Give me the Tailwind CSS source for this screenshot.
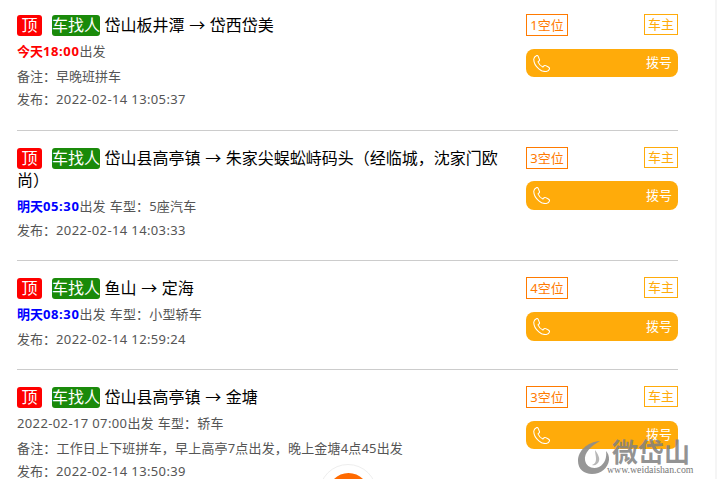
<!DOCTYPE html>
<html lang="en">
<head>
    <title>拼车</title>
    <meta charset="UTF-8">
    <script src="https://cdn.jsdelivr.net/npm/@tailwindcss/browser@4"></script>
</head>
<body class="bg-white">
<div class="relative h-[479px] overflow-hidden font-['Noto_Sans','Noto_Sans_CJK_SC',sans-serif] text-[13px] text-[#555]">
    <div class="w-[715px] pl-[17px] pr-[37px]">
        <!-- row 1 -->
        <div class="flex h-[131px] pt-[14px] border-b border-[#ccc]">
            <div class="flex-1 pr-[16px]">
                <div class="text-[16px] leading-[22px] text-black"><span class="inline-block w-[25px] h-[21px] leading-[21px] text-center rounded-[3px] bg-[#f00] text-white">顶</span><span class="inline-block ml-[10px] mr-[4.5px] h-[21px] leading-[21px] rounded-[3px] bg-[#1a8a0a] text-white">车找人</span>岱山板井潭 <span class="mx-[0.5px]">→</span> 岱西岱美</div>
                <div class="mt-[3px] leading-[25px]"><b class="text-[#f00]">今天<span class="tracking-[0.6px]">18:00</span></b>出发</div>
                <div class="leading-[24px]">备注：早晚班拼车</div>
                <div class="leading-[23px]">发布：<span class="tracking-[0.37px]">2022-02-14 13:05:37</span></div>
            </div>
            <div class="w-[152px] shrink-0">
                <div class="flex justify-between items-start h-[35px]">
                    <span class="border border-[#ff7a00] w-[42px] h-[22px] leading-[20px] text-center text-[#ff7a00]">1空位</span>
                    <span class="border border-[#ffab0a] w-[34px] h-[21px] leading-[19px] text-center text-[#ffab0a]">车主</span>
                </div>
                <div class="flex justify-between items-center h-[28px] rounded-[8px] bg-[#ffab0a] pl-[7px] pr-[6px] text-white">
                    <svg class="w-[17px] h-[17px]" viewBox="0 0 16 16" fill="none" stroke="currentColor" stroke-width="1"><path d="M3.500.5C2 1.200.8 2.500.7 4c.1 4 2.300 7 4.800 9 2 1.800 4.500 2.800 7 2.500 1.500-.3 2.800-1.500 3-2.500.2-.7-.5-1.500-1.500-2l-2-1c-1-.4-1.700 0-2.200.7l-.5.6C7.500 10.500 5.500 8.500 4.700 6.500l.8-.7c.7-.6.8-1.300.4-2.100L5 1.500C4.700.7 4.200.3 3.500.5z"/></svg>
                    拨号
                </div>
            </div>
        </div>
        <!-- row 2 -->
        <div class="flex h-[130px] pt-[16px] border-b border-[#ccc]">
            <div class="flex-1 pr-[16px]">
                <div class="text-[16px] leading-[22px] text-black"><span class="inline-block w-[25px] h-[21px] leading-[21px] text-center rounded-[3px] bg-[#f00] text-white">顶</span><span class="inline-block ml-[10px] mr-[4.5px] h-[21px] leading-[21px] rounded-[3px] bg-[#1a8a0a] text-white">车找人</span>岱山县高亭镇 <span class="mx-[0.5px]">→</span> 朱家尖蜈蚣峙码头（经临城，沈家门欧尚）</div>
                <div class="mt-[3px] leading-[25px]"><b class="text-[#00f]">明天<span class="tracking-[0.6px]">05:30</span></b>出发 <span class="ml-[1px] tracking-[0.15px]">车型：5座汽车</span></div>
                <div class="leading-[22px]">发布：<span class="tracking-[0.37px]">2022-02-14 14:03:33</span></div>
            </div>
            <div class="w-[152px] shrink-0">
                <div class="flex justify-between items-start h-[34px]">
                    <span class="border border-[#ff7a00] w-[42px] h-[22px] leading-[20px] text-center text-[#ff7a00]">3空位</span>
                    <span class="border border-[#ffab0a] w-[34px] h-[21px] leading-[19px] text-center text-[#ffab0a]">车主</span>
                </div>
                <div class="flex justify-between items-center h-[29px] rounded-[8px] bg-[#ffab0a] pl-[7px] pr-[6px] text-white">
                    <svg class="w-[17px] h-[17px]" viewBox="0 0 16 16" fill="none" stroke="currentColor" stroke-width="1"><path d="M3.500.5C2 1.200.8 2.500.7 4c.1 4 2.300 7 4.800 9 2 1.800 4.500 2.800 7 2.500 1.500-.3 2.800-1.500 3-2.500.2-.7-.5-1.500-1.500-2l-2-1c-1-.4-1.700 0-2.200.7l-.5.6C7.500 10.500 5.500 8.500 4.700 6.500l.8-.7c.7-.6.8-1.300.4-2.100L5 1.500C4.700.7 4.200.3 3.500.5z"/></svg>
                    拨号
                </div>
            </div>
        </div>
        <!-- row 3 -->
        <div class="flex h-[109px] pt-[16px] border-b border-[#ccc]">
            <div class="flex-1 pr-[16px]">
                <div class="text-[16px] leading-[22px] text-black"><span class="inline-block w-[25px] h-[21px] leading-[21px] text-center rounded-[3px] bg-[#f00] text-white">顶</span><span class="inline-block ml-[10px] mr-[4.5px] h-[21px] leading-[21px] rounded-[3px] bg-[#1a8a0a] text-white">车找人</span>鱼山 <span class="mx-[0.5px]">→</span> 定海</div>
                <div class="mt-[3px] leading-[25px]"><b class="text-[#00f]">明天<span class="tracking-[0.6px]">08:30</span></b>出发 <span class="ml-[1px] tracking-[0.15px]">车型：小型轿车</span></div>
                <div class="leading-[25px]">发布：<span class="tracking-[0.37px]">2022-02-14 12:59:24</span></div>
            </div>
            <div class="w-[152px] shrink-0">
                <div class="flex justify-between items-start h-[35px]">
                    <span class="border border-[#ff7a00] w-[42px] h-[22px] leading-[20px] text-center text-[#ff7a00]">4空位</span>
                    <span class="border border-[#ffab0a] w-[34px] h-[21px] leading-[19px] text-center text-[#ffab0a]">车主</span>
                </div>
                <div class="flex justify-between items-center h-[29px] rounded-[8px] bg-[#ffab0a] pl-[7px] pr-[6px] text-white">
                    <svg class="w-[17px] h-[17px]" viewBox="0 0 16 16" fill="none" stroke="currentColor" stroke-width="1"><path d="M3.500.5C2 1.200.8 2.500.7 4c.1 4 2.300 7 4.800 9 2 1.800 4.500 2.800 7 2.500 1.500-.3 2.800-1.500 3-2.500.2-.7-.5-1.500-1.500-2l-2-1c-1-.4-1.700 0-2.200.7l-.5.6C7.500 10.500 5.500 8.500 4.700 6.500l.8-.7c.7-.6.8-1.300.4-2.100L5 1.500C4.700.7 4.200.3 3.500.5z"/></svg>
                    拨号
                </div>
            </div>
        </div>
        <!-- row 4 -->
        <div class="flex pt-[16px]">
            <div class="flex-1 pr-[16px]">
                <div class="text-[16px] leading-[22px] text-black"><span class="inline-block w-[25px] h-[21px] leading-[21px] text-center rounded-[3px] bg-[#f00] text-white">顶</span><span class="inline-block ml-[10px] mr-[4.5px] h-[21px] leading-[21px] rounded-[3px] bg-[#1a8a0a] text-white">车找人</span>岱山县高亭镇 <span class="mx-[0.5px]">→</span> 金塘</div>
                <div class="mt-[3px] leading-[25px]"><span class="tracking-[0.37px]">2022-02-17 07:00</span>出发 <span class="ml-[1px] tracking-[0.15px]">车型：轿车</span></div>
                <div class="leading-[24px] tracking-[0.17px]">备注：工作日上下班拼车，早上高亭7点出发，晚上金塘4点45出发</div>
                <div class="leading-[23px]">发布：<span class="tracking-[0.37px]">2022-02-14 13:50:39</span></div>
            </div>
            <div class="w-[152px] shrink-0">
                <div class="flex justify-between items-start h-[35px]">
                    <span class="border border-[#ff7a00] w-[42px] h-[22px] leading-[20px] text-center text-[#ff7a00]">3空位</span>
                    <span class="border border-[#ffab0a] w-[34px] h-[21px] leading-[19px] text-center text-[#ffab0a]">车主</span>
                </div>
                <div class="flex justify-between items-center h-[28px] rounded-[8px] bg-[#ffab0a] pl-[7px] pr-[6px] text-white">
                    <svg class="w-[17px] h-[17px]" viewBox="0 0 16 16" fill="none" stroke="currentColor" stroke-width="1"><path d="M3.500.5C2 1.200.8 2.500.7 4c.1 4 2.300 7 4.800 9 2 1.800 4.500 2.800 7 2.500 1.500-.3 2.800-1.500 3-2.500.2-.7-.5-1.500-1.500-2l-2-1c-1-.4-1.700 0-2.200.7l-.5.6C7.500 10.500 5.500 8.500 4.700 6.500l.8-.7c.7-.6.8-1.300.4-2.100L5 1.500C4.700.7 4.200.3 3.500.5z"/></svg>
                    拨号
                </div>
            </div>
        </div>
    </div>
    <div class="absolute top-0 right-0 w-[2px] h-full bg-[#f5f5f5]"></div>
    <!-- floating round button, cut off by the window -->
    <div class="absolute left-[319px] top-[464px] w-[58px] h-[58px] rounded-full bg-white border border-[#eee] flex items-center justify-center">
        <div class="w-[41px] h-[41px] rounded-full bg-[#ff6a00]"></div>
    </div>
    <!-- watermark -->
    <div class="absolute left-[577px] top-[438px] w-[114px] h-[38px]">
        <svg class="absolute left-0 top-[3px] w-[33px] h-[33px]" viewBox="0 0 33 33"><path d="M23 0C10 1 1 10 1 20c0 8 6 13 14 13 9 0 16-6 17-14 .3-4-1-7-3-9 1 6-1 13-7 16-6 2.500-13 0-14-7C7 12 14 5 23 0z" fill="#8c8c8c" fill-opacity=".9"/><path d="M18 9c3 4 5 8 4 11-1 3-4 5-7 4 3-1 4-3 4-6 0-3-1-6-1-9z" fill="#aaa" fill-opacity=".85"/></svg>
        <div class="absolute left-[35px] top-0 text-[26px] leading-[28px] font-bold text-[#808080]/85 whitespace-nowrap">微岱山</div>
        <div class="absolute left-[30px] top-[27px] text-[9.8px] leading-[10px] text-[#777] font-['Liberation_Serif',serif] whitespace-nowrap">www.weidaishan.com</div>
    </div>
</div>
</body>
</html>
